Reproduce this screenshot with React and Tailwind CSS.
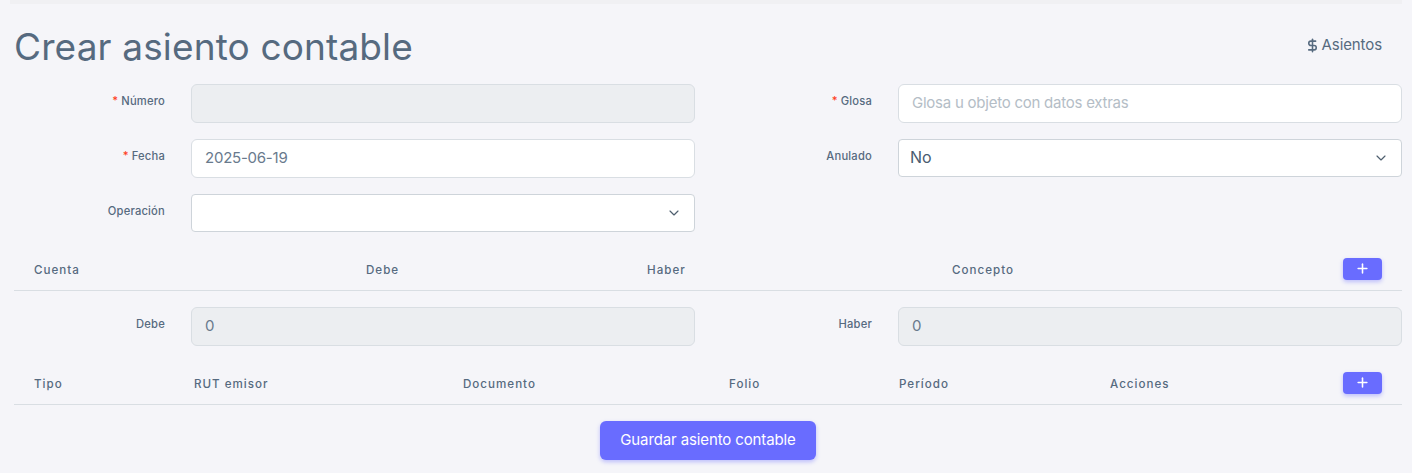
import React from "react";
import { ChevronDown, DollarSign, Plus } from "lucide-react";

const FONT = "font-['Inter','Liberation_Sans',sans-serif]";

const ACCOUNT_COLUMNS = [
  { label: "Cuenta", width: "w-[332px]" },
  { label: "Debe", width: "w-[281px]" },
  { label: "Haber", width: "w-[305px]" },
  { label: "Concepto", width: "w-[391px]" },
];

const DOCUMENT_COLUMNS = [
  { label: "Tipo", width: "w-[160px]" },
  { label: "RUT emisor", width: "w-[269px]" },
  { label: "Documento", width: "w-[266px]" },
  { label: "Folio", width: "w-[170px]" },
  { label: "Período", width: "w-[211px]" },
  { label: "Acciones", width: "w-[233px]" },
];

function Field({ label, required, children }) {
  return (
    <div className="flex w-[681px] items-start">
      <label className="flex h-[36px] w-[151px] shrink-0 items-center justify-end text-[11.2px] font-medium leading-none tracking-[0.2px] text-[#566a7f]">
        {required && <span className="mr-[3px] text-[#ff3e1d]">*</span>}
        {label}
      </label>
      <div className="ml-[26px] w-[504px]">{children}</div>
    </div>
  );
}

function TextBox({ value, placeholder, disabled }) {
  const color = disabled ? "bg-[#eceef1]" : "bg-white";
  return (
    <input
      readOnly
      disabled={disabled}
      value={value}
      placeholder={placeholder}
      className={`block h-[39px] w-full rounded-md border border-[#d9dee3] px-[13px] pb-[2px] text-[15px] tracking-[-0.24px] text-[#697a8d] placeholder:text-[#b4bdc6] ${color}`}
    />
  );
}

function SelectBox({ value }) {
  return (
    <div className="flex h-[38px] w-full items-center justify-between rounded-[4px] border border-[#ced4da] bg-white pl-[11px] pr-[12px] text-[16px] text-[#495c70]">
      <span className="pb-[2px]">{value}</span>
      <ChevronDown size={16} strokeWidth={1.75} className="text-[#4f5f6f]" />
    </div>
  );
}

function HeaderTable({ columns }) {
  return (
    <table className="w-[1388px] table-fixed border-separate border-spacing-0">
      <thead>
        <tr className="h-[45px]">
          {columns.map((col) => (
            <th
              key={col.label}
              className={`${col.width} border-b border-[#d9dee3] pl-5 pt-[6px] text-left text-[11.6px] font-medium tracking-[1px] text-[#566a7f]`}
            >
              {col.label}
            </th>
          ))}
          <th className="w-[79px] border-b border-[#d9dee3] pl-5 text-left align-top">
            <button className="mt-[12px] flex h-[22px] w-[39px] items-center justify-center rounded-[4px] bg-[#696cff] pb-px text-white shadow-[0_2px_4px_0_rgba(105,108,255,0.4)]">
              <Plus size={15} strokeWidth={2.5} />
            </button>
          </th>
        </tr>
      </thead>
    </table>
  );
}

export default function App() {
  return (
    <div className={`${FONT} relative h-[473px] overflow-hidden bg-[#f5f5f9] px-[14px]`}>
      <div className="absolute inset-x-[10px] top-0 h-[4px] bg-[#f0f0f3]" />

      <div className="flex h-[84px] items-start justify-between">
        <h1 className="mt-[22px] text-[37px] font-normal leading-[50px] tracking-[0.14px] text-[#566a7f]">
          Crear asiento contable
        </h1>
        <a className="mr-4 mt-[35px] flex items-center text-[15px] leading-5 tracking-[-0.1px] text-[#566a7f]">
          <DollarSign size={15} strokeWidth={2.5} className="mr-[2px]" />
          Asientos
        </a>
      </div>

      <div className="flex w-[1388px] justify-between">
        <div className="flex flex-col gap-4">
          <Field label="Número" required>
            <TextBox value="" disabled />
          </Field>
          <Field label="Fecha" required>
            <TextBox value="2025-06-19" />
          </Field>
          <Field label="Operación">
            <SelectBox value="" />
          </Field>
        </div>
        <div className="flex flex-col gap-4">
          <Field label="Glosa" required>
            <TextBox value="" placeholder="Glosa u objeto con datos extras" />
          </Field>
          <Field label="Anulado">
            <SelectBox value="No" />
          </Field>
        </div>
      </div>

      <div className="mt-[14px]">
        <HeaderTable columns={ACCOUNT_COLUMNS} />
      </div>

      <div className="mt-4 flex w-[1388px] justify-between">
        <Field label="Debe">
          <TextBox value="0" disabled />
        </Field>
        <Field label="Haber">
          <TextBox value="0" disabled />
        </Field>
      </div>

      <div className="mt-[14px]">
        <HeaderTable columns={DOCUMENT_COLUMNS} />
      </div>

      <div className="mt-4 flex w-[1388px] justify-center">
        <button className="h-[39px] w-[216px] rounded-md bg-[#696cff] text-[15px] tracking-[-0.12px] text-white shadow-[0_2px_4px_0_rgba(105,108,255,0.4)]">
          Guardar asiento contable
        </button>
      </div>
    </div>
  );
}
